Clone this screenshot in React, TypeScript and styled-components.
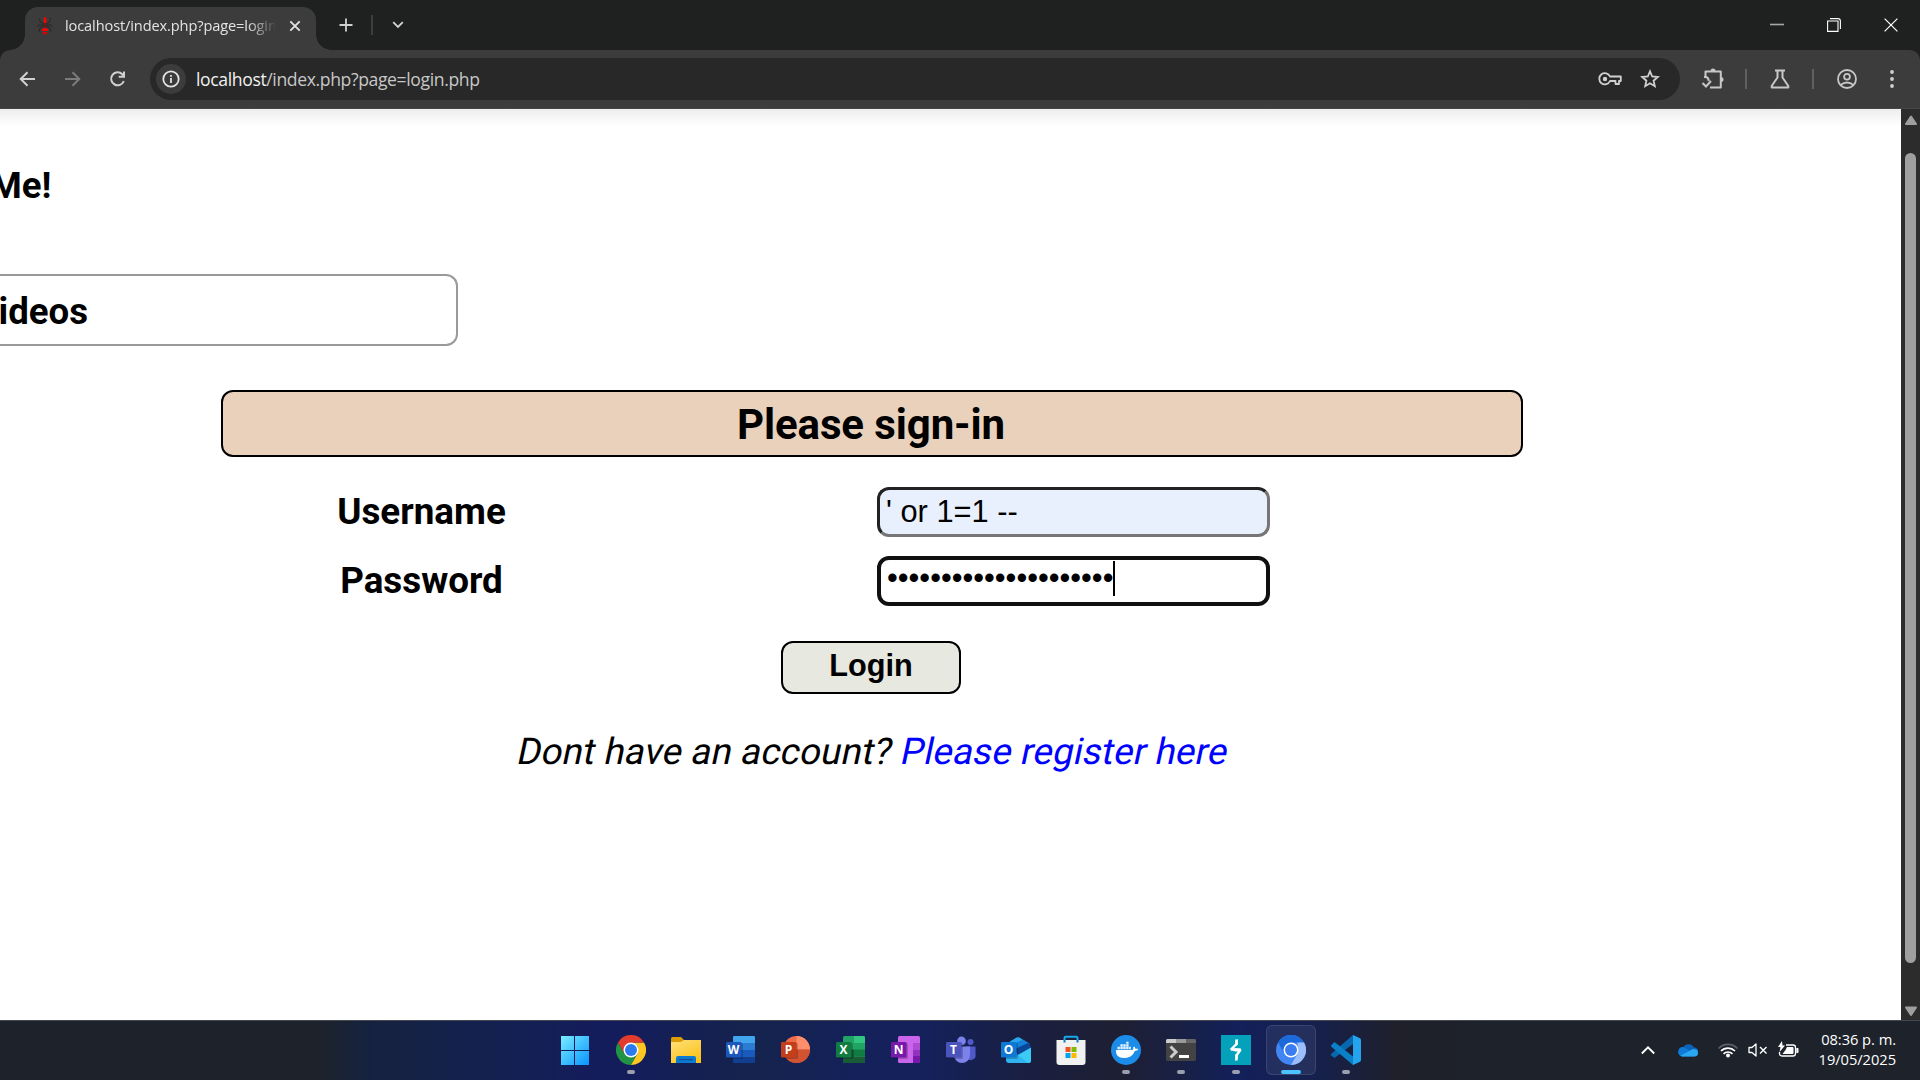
import React from "react";
import styled, { createGlobalStyle } from "styled-components";

const GlobalStyle = createGlobalStyle`
  *, *::before, *::after { box-sizing: border-box; }
  html, body { margin: 0; padding: 0; overflow: hidden; background: #202221; }
  svg { display: block; flex: none; }
`;

const UI_FONT = `"Open Sans", "Noto Sans", sans-serif`;

const Screen = styled.div`
  width: 1920px;
  height: 1080px;
  display: flex;
  flex-direction: column;
  overflow: hidden;
`;

/* ---------- tab strip ---------- */
const TabStrip = styled.header`
  height: 50px;
  flex: none;
  display: flex;
  align-items: flex-end;
  background: #1f2120;
  padding-left: 25px;
`;

const Tab = styled.div`
  position: relative;
  width: 291px;
  height: 43px;
  padding: 0 14px 6px 10px;
  border-radius: 13px 13px 0 0;
  background: #3c3c3c;
  display: flex;
  align-items: center;
  &::before, &::after {
    content: "";
    position: absolute;
    bottom: 0;
    width: 15px;
    height: 15px;
  }
  &::before { left: -15px; background: radial-gradient(circle at 0 0, transparent 14.5px, #3c3c3c 15px); }
  &::after { right: -15px; background: radial-gradient(circle at 100% 0, transparent 14.5px, #3c3c3c 15px); }
`;

const TabTitle = styled.div`
  width: 210px;
  margin: 0 0 2px 10px;
  overflow: hidden;
  white-space: nowrap;
  font: 400 14.6px/22px ${UI_FONT};
  letter-spacing: -0.12px;
  color: #e3e3e3;
  mask-image: linear-gradient(90deg, #000 182px, transparent 212px);
`;

const StripTools = styled.div`
  flex: 1;
  height: 50px;
  display: flex;
  align-items: center;
  padding-left: 23px;
`;

const Divider = styled.i<{ $gap: string; $color: string }>`
  width: 2px;
  height: 20px;
  margin: ${(p) => p.$gap};
  background: ${(p) => p.$color};
`;

const WindowButtons = styled.div`
  height: 50px;
  display: flex;
  align-items: center;
  & > svg { margin-right: 43px; }
  & > svg:last-child { margin-right: 22px; }
`;

/* ---------- toolbar ---------- */
const ToolbarBack = styled.div`
  height: 59px;
  flex: none;
  background: #1f2120;
`;

const Toolbar = styled.div`
  height: 59px;
  display: flex;
  align-items: center;
  padding: 0 20px 0 18px;
  border-radius: 10px 10px 0 0;
  border-bottom: 1px solid #474747;
  background: #3c3c3c;
`;

const NavButtons = styled.nav`
  width: 132px;
  display: flex;
  gap: 25px;
`;

const AddressBar = styled.div`
  width: 1530px;
  height: 42px;
  border-radius: 21px;
  padding: 0 20px 0 6px;
  background: #282828;
  display: flex;
  align-items: center;
`;

const InfoChip = styled.span`
  width: 30px;
  height: 30px;
  border-radius: 50%;
  background: #3c3c3c;
  display: grid;
  place-items: center;
`;

const Url = styled.div`
  flex: 1;
  margin-left: 10px;
  font: 400 17.6px/26px ${UI_FONT};
  letter-spacing: -0.38px;
  color: #c7c7c7;
  b { font-weight: 400; color: #f1f1f1; }
`;

const ToolActions = styled.div`
  flex: 1;
  display: flex;
  align-items: center;
  padding-left: 21px;
`;

/* ---------- web page ---------- */
const Viewport = styled.div`
  height: 911px;
  flex: none;
  display: flex;
`;

const Page = styled.main`
  width: 1901px;
  background: linear-gradient(#ededed, #fff 17px);
  font-family: Roboto, sans-serif;
  color: #000;
`;

const SiteHeading = styled.div`
  width: 51.5px;
  margin-top: 57px;
  height: 40px;
  display: flex;
  justify-content: flex-end;
  overflow: hidden;
  font: 700 36.6px/40px Roboto, sans-serif;
`;

const VideoBox = styled.section`
  width: 458px;
  height: 72px;
  margin-top: 67.5px;
  padding-top: 1px;
  border: 2px solid #999;
  border-left: 0;
  border-radius: 0 12px 12px 0;
  font: 700 36.6px/70px Roboto, sans-serif;
`;

const ClippedHeading = styled.div`
  width: 88px;
  display: flex;
  justify-content: flex-end;
  overflow: hidden;
`;

const LoginForm = styled.form`
  width: 1302px;
  margin: 44.5px 0 0 221px;
  display: flex;
  flex-direction: column;
  align-items: center;
`;

const FormTitle = styled.h1`
  width: 100%;
  height: 67px;
  margin: 0 0 30px;
  padding: 1px 2px 0 0;
  border: 2px solid #000;
  border-radius: 12px;
  background: #e9d1bb;
  text-align: center;
  font: 700 42px/64px Roboto, sans-serif;
  letter-spacing: -0.1px;
`;

const FieldRow = styled.div`
  width: 100%;
  height: 50px;
  margin-bottom: 19px;
  display: grid;
  grid-template-columns: 401px 393px;
  column-gap: 255px;
  align-items: center;
`;

const FieldLabel = styled.label`
  text-align: center;
  font: 700 36.8px/50px Roboto, sans-serif;
`;

const Field = styled.div<{ $filled?: boolean }>`
  height: 50px;
  padding: ${(p) => (p.$filled ? "0 0 0 6px" : "0 0 6px 6px")};
  display: flex;
  align-items: center;
  border-style: solid;
  border-width: ${(p) => (p.$filled ? 3 : 4)}px;
  border-color: ${(p) => (p.$filled ? "#222 #767676 #767676 #222" : "#101010")};
  border-radius: 12px;
  background: ${(p) => (p.$filled ? "#e8f0fe" : "#fff")};
  font: 400 30.8px/42px "Liberation Sans", Arial, sans-serif;
  white-space: pre;
`;

const Caret = styled.i`
  width: 2px;
  height: 35px;
  background: #000;
`;

const LoginButton = styled.button`
  width: 180px;
  height: 53px;
  margin: 16px 2px 0 0;
  padding: 0 0 3px;
  border: 2px solid #000;
  border-radius: 12px;
  background: #e7e8e0;
  color: #000;
  font: 700 30.7px/44px "Liberation Sans", Arial, sans-serif;
`;

const Register = styled.p`
  margin: 37px 0 0;
  padding-left: 3px;
  white-space: nowrap;
  font: 400 36.8px/42px Roboto, sans-serif;
  letter-spacing: 0.12px;
  transform: skewX(-12deg);
  a { color: #00f; text-decoration: none; }
`;

const Scrollbar = styled.div`
  width: 19px;
  background: #2c2c2c;
  display: flex;
  flex-direction: column;
  align-items: center;
  padding: 6px 0 3px;
`;

const Thumb = styled.i`
  width: 11px;
  height: 810px;
  margin: 27px 0 43px;
  border-radius: 6px;
  background: #9f9f9f;
`;

/* ---------- taskbar ---------- */
const Taskbar = styled.footer`
  height: 60px;
  flex: none;
  display: grid;
  grid-template-columns: 549px 1fr 520px;
  border-top: 1px solid #44484f;
  background: linear-gradient(
    90deg, #1d222b 0, #1d222b 320px, #15223f 370px, #14214f 480px, #141c5c 610px, #15234d 750px,
    #14215b 860px, #14215a 930px, #1a1f40 1030px, #1e1f33 1120px, #182044 1180px, #13205a 1235px,
    #15204f 1310px, #1f2029 1400px, #1d222b 1500px
  );
`;

const Dock = styled.div`
  grid-column: 2;
  display: flex;
  gap: 5px;
  padding: 4px 0 0 2px;
`;

const DockItem = styled.div<{ $state?: "open" | "active" }>`
  width: 50px;
  height: 50px;
  padding-top: 9px;
  display: flex;
  flex-direction: column;
  align-items: center;
  border-radius: 6px;
  border: 1px solid ${(p) => (p.$state === "active" ? "rgba(255,255,255,.1)" : "transparent")};
  background: ${(p) => (p.$state === "active" ? "rgba(255,255,255,.07)" : "transparent")};
  &::after {
    content: "";
    margin-top: 5px;
    width: ${(p) => (p.$state === "active" ? 20 : 8)}px;
    height: 4px;
    border-radius: 2px;
    background: ${(p) => (p.$state === "active" ? "#4cc2ff" : p.$state ? "#9a9fb0" : "transparent")};
  }
`;

const Tray = styled.div`
  display: flex;
  align-items: flex-start;
  justify-content: flex-end;
  padding: 0 24px 0 0;
  color: #fff;
`;

const TrayIcons = styled.div`
  display: flex;
  align-items: center;
  height: 58px;
  margin-right: 20px;
`;

const Clock = styled.div`
  padding-top: 8px;
  text-align: right;
  white-space: nowrap;
  font: 400 14.7px/20px ${UI_FONT};
  letter-spacing: -0.05px;
`;

const Spacer = styled.i<{ $w: number }>`
  width: ${(p) => p.$w}px;
`;

/* ---------- icons ---------- */
const Ant = () => (
  <svg width="20" height="20" viewBox="0 0 20 20">
    <path d="M9 8 5 5.500 4.500 2M11 8l4-2.500L15.500 2M9 9H4l-1.500 2M11 9h5l1.500 2M9 10l-4 2-1 4M11 10l4 2 1 4" fill="none" stroke="#222" strokeWidth=".8" />
    <rect x="8.8" y="1.5" width="2.6" height="5.5" rx=".6" fill="#f00" />
    <rect x="9.3" y="7" width="1.5" height="5" fill="#7a1010" />
    <path d="M6.800 14.200c0-3 6.400-3 6.400 0v.800H6.800z" fill="#f00" />
    <path d="M7.600 16h4.800c0 1.500-1 2.500-2.400 2.500S7.600 17.500 7.600 16z" fill="#d00" />
  </svg>
);

const stroke = (c = "#c7c7c7", w = 2) => ({ fill: "none", stroke: c, strokeWidth: w });

const Office = ({ letter, dark, children }: { letter: string; dark: string; children: React.ReactNode }) => (
  <svg width="30" height="30" viewBox="0 0 30 30">
    {children}
    <rect x="1" y="8" width="16" height="16" rx="1.5" fill="#000" opacity=".2" />
    <rect x="0" y="7" width="15.5" height="15.5" rx="1.3" fill={dark} />
    <text x="7.6" y="18.9" textAnchor="middle" fontFamily="Open Sans, sans-serif" fontWeight="700" fontSize="12" fill="#fff">
      {letter}
    </text>
  </svg>
);

const WindowsLogo = () => (
  <svg width="30" height="30" viewBox="0 0 30 30">
    <defs>
      <linearGradient id="win" x1="0" y1="0" x2="29" y2="29" gradientUnits="userSpaceOnUse">
        <stop offset="0" stopColor="#7df0ff" />
        <stop offset="1" stopColor="#0a95ff" />
      </linearGradient>
    </defs>
    <path d="M0 1h14v14H0zM15 1h14v14H15zM0 16h14v14H0zM15 16h14v14H15z" fill="url(#win)" transform="translate(-1 0)" />
  </svg>
);

const Chrome = () => (
  <svg width="30" height="30" viewBox="0 0 30 30">
    <path d="M2 7.500A15 15 0 0 0 15 30L21.500 18.750H8.500z" fill="#219345" />
    <path d="M28 7.500A15 15 0 0 1 15 30L21.500 18.750 21.500 11.250 15 7.500z" fill="#fdc620" />
    <path d="M15 7.500H28A15 15 0 0 0 2 7.500L8.500 18.750z" fill="#e33b2e" />
    <circle cx="15" cy="15" r="7.5" fill="#fff" />
    <circle cx="15" cy="15" r="6" fill="#2b7bf0" />
  </svg>
);

const Explorer = () => (
  <svg width="30" height="30" viewBox="0 0 30 30">
    <defs>
      <linearGradient id="fold" x2=".6" y2="1">
        <stop offset="0" stopColor="#ffe07a" />
        <stop offset="1" stopColor="#fbc21a" />
      </linearGradient>
    </defs>
    <path d="M0 3.500Q0 2 1.500 2H10l3.500 3.500V12H0z" fill="#dc9c05" />
    <path d="M0 7h10l3-2h17v23H0z" fill="url(#fold)" />
    <path d="M5 28V23q0-2 2-2h16q2 0 2 2v5z" fill="#0c7ad0" />
    <rect x="8" y="24" width="14" height="1.2" fill="#0b4f95" />
  </svg>
);

const Word = () => (
  <Office letter="W" dark="#1b57bd">
    <rect x="7" y="1" width="22" height="27" rx="1.5" fill="#2b7cd3" />
    <path d="M8.500 1h19q1.500 0 1.500 1.500V8H7V2.500Q7 1 8.500 1z" fill="#41a5ee" />
    <path d="M7 15h22v6H7z" fill="#185abd" />
    <path d="M7 21.500h22V28H7z" fill="#103f91" />
  </Office>
);

const PowerPoint = () => (
  <Office letter="P" dark="#c43e1c">
    <circle cx="15.5" cy="14.5" r="13.5" fill="#ed6c47" />
    <path d="M15.500 1A13.500 13.500 0 0 1 29 14.500H15.500z" fill="#ff8f6b" />
    <path d="M2 14.500h27a13.500 13.500 0 0 1-27 0z" fill="#d35230" />
  </Office>
);

const Excel = () => (
  <Office letter="X" dark="#107c41">
    <rect x="7" y="1" width="22" height="27" rx="1.5" fill="#21a366" />
    <path d="M18 1h9.500Q29 1 29 2.500V8H18z" fill="#33c481" />
    <path d="M7 14.500h11V28H7z" fill="#185c37" />
    <path d="M18 14.500h11V21H18z" fill="#107c41" />
    <path d="M7 21.500h22V28H7z" fill="#185c37" />
  </Office>
);

const OneNote = () => (
  <Office letter="N" dark="#7719aa">
    <rect x="7" y="1" width="22" height="27" rx="1.5" fill="#ca64ea" />
    <path d="M22 8h7v7h-7z" fill="#ae4bd5" />
    <path d="M22 15h7v6h-7z" fill="#9332bf" />
    <path d="M22 21h7v7h-7z" fill="#7719aa" />
  </Office>
);

const Teams = () => (
  <Office letter="T" dark="#4b53bc">
    <circle cx="24.5" cy="7" r="3" fill="#5059c9" />
    <path d="M20 11.500h9.500V19a5 5 0 0 1-9.500 3z" fill="#5059c9" />
    <circle cx="15.5" cy="6" r="4.4" fill="#7b83eb" />
    <path d="M8 11.500h16V20a8 8 0 0 1-16 0z" fill="#7b83eb" />
  </Office>
);

const Outlook = () => (
  <Office letter="O" dark="#0f78d4">
    <path d="M5 9 15.500 2.600q1.500-.900 3 0L28 8.500V22H5z" fill="#28a8ea" />
    <path d="M11 9 22 4.800 29 9 14 18z" fill="#1480d8" />
    <path d="M14 14 27 8q2.500 1 2.500 3v4L17 21z" fill="#0a4596" />
    <path d="M30 12.500V26q0 2-2 2H15V21z" fill="#3ccbf4" />
    <path d="M5 22 17 20 27 28H8q-3 0-3-3z" fill="#2fb4ef" />
  </Office>
);

const Store = () => (
  <svg width="30" height="30" viewBox="0 0 30 30">
    <path d="M8.500 6V3q0-1.200 1.200-1.200h10.600Q21.500 1.800 21.500 3V6" {...stroke("#1ba7ec", 2)} />
    <path d="M.500 5h29v22q0 3-3 3h-23q-3 0-3-3z" fill="#f1f1f1" />
    <path d="M8.500 5v2.500M21.500 5v2.500" {...stroke("#0b7fc4", 2)} />
    <path d="M9.500 12h5v5h-5z" fill="#f25022" />
    <path d="M15.500 12h5v5h-5z" fill="#7fba00" />
    <path d="M9.500 18h5v5h-5z" fill="#00a4ef" />
    <path d="M15.500 18h5v5h-5z" fill="#ffb900" />
  </svg>
);

const Docker = () => (
  <svg width="30" height="30" viewBox="0 0 30 30">
    <circle cx="15" cy="15" r="15" fill="#1c8ce9" />
    <path d="M5 15h16c1 0 1.700-.800 1.200-2.400l.8-1.100c1 .700 1.300 1.400 1.300 2.200 1 0 2-.200 2.900.4-.700 1.400-1.800 1.900-3.400 1.900C22 20.500 18.500 23 13 23c-5.500 0-8.500-3-8-8z" fill="#fff" />
    <path d="M6.500 11.800h2.400v2.400H6.500zM9.400 11.800h2.400v2.400H9.400zM12.300 11.800h2.400v2.400h-2.400zM15.200 11.800h2.400v2.400h-2.400zM18.100 11.800h1.800v2.400h-1.800zM9.400 9.200h2.400v2.200H9.400zM12.300 9.200h2.400v2.200h-2.400zM15.200 9.200h2.400v2.200h-2.400zM15.200 6.800h2.400v2h-2.400z" fill="#e8f4ff" />
  </svg>
);

const Terminal = () => (
  <svg width="30" height="30" viewBox="0 0 30 30">
    <rect y="4" width="30" height="22" rx="1.5" fill="#434343" />
    <path d="M1.500 4H10v4H0V5.500Q0 4 1.500 4z" fill="#ccc" />
    <path d="M10 4h10v4H10z" fill="#999" />
    <path d="M20 4h8.500Q30 4 30 5.500V8H20z" fill="#666" />
    <path d="m4.500 11.500 5.500 5.500-5.500 5.500" {...stroke("#ccc", 3)} />
    <path d="M13 20h10v3H13z" fill="#fff" />
  </svg>
);

const Burp = () => (
  <svg width="30" height="30" viewBox="0 0 30 30">
    <path d="M0 0h30v30H0z" fill="#04a2ba" />
    <path d="M15.500 4.500V9l-5.500 5.500h9.500l-4 6v5" fill="none" stroke="#fff" strokeWidth="2.4" strokeLinejoin="bevel" />
    <path d="m16.700 4-2.400 2v5l2.400-1zM14.300 26l2.400-2.500V18l-2.400 1.500zM9 13.500l5 3h6.500l-4.500-3z" fill="#fff" />
  </svg>
);

const Chromium = () => (
  <svg width="30" height="30" viewBox="0 0 30 30">
    <circle cx="15" cy="15" r="15" fill="#4285f4" />
    <path d="M2 7.500A15 15 0 0 1 28 7.500H15L8.500 18.750z" fill="#1c69dc" />
    <path d="M28 7.500A15 15 0 0 1 15 30l6.500-11.250V7.500z" fill="#9cbcfa" />
    <circle cx="15" cy="15" r="7.5" fill="#fff" />
    <circle cx="15" cy="15" r="6" fill="#3b7df0" />
  </svg>
);

const VsCode = () => (
  <svg width="30" height="30" viewBox="0 0 30 30">
    <path d="M22 0 22 9 3.500 23 0 20.500V19z" fill="#0768ad" />
    <path d="M0 10.500 3.500 7 22 21.500V30L0 11.500z" fill="#0b7fc8" />
    <path d="M22 0l6.500 3q1.500.700 1.500 2v20q0 1.300-1.500 2L22 30z" fill="#24a4ee" />
  </svg>
);

const dock: { Icon: () => React.JSX.Element; state?: "open" | "active" }[] = [
  { Icon: WindowsLogo },
  { Icon: Chrome, state: "open" },
  { Icon: Explorer },
  { Icon: Word },
  { Icon: PowerPoint },
  { Icon: Excel },
  { Icon: OneNote },
  { Icon: Teams },
  { Icon: Outlook },
  { Icon: Store },
  { Icon: Docker, state: "open" },
  { Icon: Terminal, state: "open" },
  { Icon: Burp, state: "open" },
  { Icon: Chromium, state: "active" },
  { Icon: VsCode, state: "open" },
];

export default function App() {
  return (
    <Screen>
      <GlobalStyle />
      <TabStrip>
        <Tab>
          <Ant />
          <TabTitle>localhost/index.php?page=login.php</TabTitle>
          <Spacer $w={14} />
          <svg width="12" height="12" viewBox="0 0 12 12"><path d="m1.300 1.300 9.400 9.400M10.700 1.300 1.300 10.700" {...stroke("#e3e3e3", 1.8)} /></svg>
        </Tab>
        <StripTools>
          <svg width="14" height="14" viewBox="0 0 14 14"><path d="M7 .500v13M.500 7h13" {...stroke("#d0d0d0", 1.8)} /></svg>
          <Divider $gap="0 19px 0 18px" $color="#3c3e3d" />
          <svg width="12" height="8" viewBox="0 0 12 8"><path d="m1.200 1.200 4.800 4.800 4.800-4.800" {...stroke("#d0d0d0", 1.9)} /></svg>
        </StripTools>
        <WindowButtons>
          <svg width="14" height="14" viewBox="0 0 14 14"><path d="M0 6.500h14" {...stroke("#a5a7a6", 1.6)} /></svg>
          <svg width="14" height="14" viewBox="0 0 14 14"><path d="M.600 3h10.400v10.400H.600z" {...stroke("#fff", 1.1)} /><path d="M3 .600h8q2.400 0 2.400 2.400v8" {...stroke("#fff", 1.1)} /></svg>
          <svg width="14" height="14" viewBox="0 0 14 14"><path d="m.600.600 12.800 12.800M13.400.600.600 13.400" {...stroke("#fff", 1.2)} /></svg>
        </WindowButtons>
      </TabStrip>

      <ToolbarBack>
        <Toolbar>
          <NavButtons>
            <svg width="20" height="20" viewBox="0 0 20 20"><path d="M17 10H3.500M9.500 3.200 2.700 10l6.800 6.800" {...stroke("#d0d0d0", 2)} /></svg>
            <svg width="20" height="20" viewBox="0 0 20 20"><path d="M2 10h13.500M9.500 3.200 16.300 10l-6.800 6.800" {...stroke("#7b7b7b", 2)} /></svg>
            <svg width="20" height="20" viewBox="0 0 20 20"><path d="M15.800 12A6.500 6.500 0 1 1 14.300 5.200L15.800 6.800M16 2.500v5.300h-5.300" {...stroke("#d0d0d0", 2)} /></svg>
          </NavButtons>
          <AddressBar>
            <InfoChip>
              <svg width="18" height="18" viewBox="0 0 18 18"><circle cx="9" cy="9" r="7.7" {...stroke("#e3e3e3", 1.8)} /><path d="M9 8v5M9 5v1.800" {...stroke("#e3e3e3", 1.8)} /></svg>
            </InfoChip>
            <Url><b>localhost</b>/index.php?page=login.php</Url>
            <svg width="24" height="16" viewBox="0 0 24 16"><path d="M12 5.500H22.800V10H21v3h-3.500v-3H12A5.600 5.600 0 1 1 12 5.500z" {...stroke("#d0d0d0", 1.8)} strokeLinejoin="round" /><circle cx="7" cy="8" r="2.2" fill="#d0d0d0" /></svg>
            <Spacer $w={18} />
            <svg width="20" height="20" viewBox="0 0 20 20"><path d="m10 2.300 2.200 5.200 5.600.500-4.200 3.700 1.200 5.500L10 14.300l-4.800 2.900 1.200-5.500L2.200 8l5.600-.500z" {...stroke("#d0d0d0", 1.8)} /></svg>
          </AddressBar>
          <ToolActions>
            <svg width="24" height="24" viewBox="0 0 24 24"><path d="M4.500 10V4.500h15.300v16H9" {...stroke("#c7c7c7", 2)} strokeLinejoin="round" /><path d="M3 10h2q3 1 2.500 4M1.500 16l3.500 3.500 5-5.500" {...stroke("#c7c7c7", 2)} /><path d="M9.500 4a2.500 2.500 0 0 1 5 0zM20 10a2.500 2.500 0 0 1 0 5z" fill="#c7c7c7" /></svg>
            <Divider $gap="0 23px 0 20px" $color="#606060" />
            <svg width="20" height="20" viewBox="0 0 20 20"><path d="M5 1.500h10M7.500 1.500v7L1.700 17v1.500h16.600V17L12.500 8.500v-7" {...stroke("#c7c7c7", 2)} strokeLinejoin="round" /></svg>
            <Divider $gap="0 23px 0 22px" $color="#606060" />
            <svg width="20" height="20" viewBox="0 0 20 20"><circle cx="10" cy="10" r="9" {...stroke("#c7c7c7", 1.8)} /><circle cx="10" cy="7.8" r="2.9" {...stroke("#c7c7c7", 1.8)} /><path d="M3.500 16q6.500-5 13 0" {...stroke("#c7c7c7", 1.8)} /></svg>
            <Spacer $w={33} />
            <svg width="4" height="18" viewBox="0 0 4 18"><circle cx="2" cy="2" r="1.9" fill="#d0d0d0" /><circle cx="2" cy="9" r="1.9" fill="#d0d0d0" /><circle cx="2" cy="16" r="1.9" fill="#d0d0d0" /></svg>
          </ToolActions>
        </Toolbar>
      </ToolbarBack>

      <Viewport>
        <Page>
          <SiteHeading>Me!</SiteHeading>
          <VideoBox><ClippedHeading>ideos</ClippedHeading></VideoBox>
          <LoginForm>
            <FormTitle>Please sign-in</FormTitle>
            <FieldRow>
              <FieldLabel>Username</FieldLabel>
              <Field $filled>{"' or 1=1 --"}</Field>
            </FieldRow>
            <FieldRow>
              <FieldLabel>Password</FieldLabel>
              <Field>{"•".repeat(21)}<Caret /></Field>
            </FieldRow>
            <LoginButton type="button">Login</LoginButton>
            <Register>Dont have an account? <a>Please register here</a></Register>
          </LoginForm>
        </Page>
        <Scrollbar>
          <svg width="14" height="11" viewBox="0 0 14 11"><path d="M7 1.500 12 9H2z" fill="#9f9f9f" stroke="#9f9f9f" strokeWidth="2" strokeLinejoin="round" /></svg>
          <Thumb />
          <svg width="14" height="11" viewBox="0 0 14 11"><path d="M7 9 12 1.500H2z" fill="#9f9f9f" stroke="#9f9f9f" strokeWidth="2" strokeLinejoin="round" /></svg>
        </Scrollbar>
      </Viewport>

      <Taskbar>
        <Dock>
          {dock.map(({ Icon, state }, i) => (
            <DockItem key={i} $state={state}><Icon /></DockItem>
          ))}
        </Dock>
        <Tray>
          <TrayIcons>
            <svg width="14" height="10" viewBox="0 0 14 10"><path d="m.800 8.500 6.200-6.200 6.200 6.200" {...stroke("#fff", 1.9)} /></svg>
            <Spacer $w={23} />
            <svg width="20" height="14" viewBox="0 0 20 14"><path d="M5 5A6 6 0 0 1 16 4.500a4.500 4.500 0 0 1 0 9H4.500A4.300 4.300 0 0 1 5 4.500z" fill="#0c62b8" /><path d="M.500 7.500A4 4 0 0 1 6 4.300L14 9 5 13.500A4.500 4.500 0 0 1 .300 9z" fill="#0f7bd8" /><path d="M2.500 12.800 15 6q5 0 5 4 0 3.500-4 3.500H4.500z" fill="#2aa8ef" /></svg>
            <Spacer $w={19} />
            <svg width="22" height="16" viewBox="0 0 22 16"><path d="M1.500 6.500a13 13 0 0 1 19 0" {...stroke("#5c6067", 1.6)} /><path d="M4 9a10 10 0 0 1 14 0M6.500 11.800a6.500 6.500 0 0 1 9 0" {...stroke("#fff", 1.7)} /><circle cx="11" cy="13.5" r="2" fill="#fff" /></svg>
            <Spacer $w={9} />
            <svg width="20" height="16" viewBox="0 0 20 16"><path d="M1 5.500h3L8 2v12L4 10.500H1z" {...stroke("#fff", 1.3)} strokeLinejoin="round" /><path d="m12 5 6.500 6.500M18.500 5 12 11.500" {...stroke("#fff", 1.4)} /></svg>
            <Spacer $w={10} />
            <svg width="21" height="18" viewBox="0 0 21 18"><path d="M8 4h7q2.500 0 2.500 2.500v6Q17.500 15 15 15H4q-2.500 0-2.500-2.500V11" {...stroke("#fff", 1.3)} /><path d="M9 6h5.500q1 0 1 1v5q0 1-1 1h-10l3-4zM18.300 7h1.500q.700 0 .700 1v3q0 1-.700 1h-1.500zM4 0 0 6h2.500L1.500 11 7 4.500H4.500z" fill="#fff" /></svg>
          </TrayIcons>
          <Clock>
            <div>08:36 p. m.</div>
            <div>19/05/2025</div>
          </Clock>
        </Tray>
      </Taskbar>
    </Screen>
  );
}
